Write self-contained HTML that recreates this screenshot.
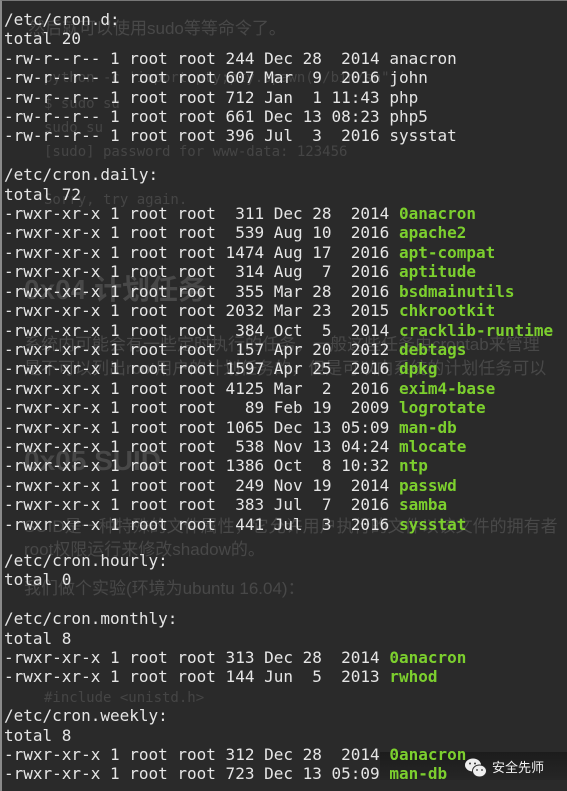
<!DOCTYPE html>
<html><head><meta charset="utf-8"><style>
body{margin:0;width:567px;height:791px;background:#2a2a2a;overflow:hidden;position:relative;font-family:"DejaVu Sans Mono","Liberation Mono",monospace;}
.frame{position:absolute;left:0;top:0;width:567px;height:791px;border-left:2px solid #8a8a8a;border-top:1px solid #777;box-sizing:border-box;}
pre{position:absolute;left:4px;margin:0;font-family:"DejaVu Sans Mono",monospace;font-size:16px;line-height:19.4px;color:#e6e6e6;white-space:pre;z-index:2}
b{color:#7ccf2e;font-weight:bold}
.g{position:absolute;color:rgba(150,150,150,0.28);font-family:"Liberation Sans","Noto Sans CJK SC",sans-serif;z-index:1;white-space:nowrap}
.gm{position:absolute;color:rgba(150,150,150,0.25);font-family:"DejaVu Sans Mono",monospace;font-size:14px;z-index:1;white-space:nowrap}
.wm{position:absolute;left:380px;top:752px;width:187px;height:28px;background:linear-gradient(#1c1c1c,#262626);z-index:1}
.wt{position:absolute;left:492px;top:757px;color:#f2f2f2;font-family:"Noto Sans CJK SC",sans-serif;font-size:13px;z-index:3}
</style></head><body>
<div class="frame"></div>
<div class="g" style="left:28px;top:14px;font-size:17px">然后就可以使用sudo等等命令了。</div>
<div class="gm" style="left:44px;top:70px">python -c 'import pty;pty.spawn("/bin/sh")'</div>
<div class="gm" style="left:44px;top:96px">$ sudo su</div>
<div class="gm" style="left:44px;top:120px">sudo su</div>
<div class="gm" style="left:44px;top:144px">[sudo] password for www-data: 123456</div>
<div class="gm" style="left:44px;top:192px">Sorry, try again.</div>
<div class="g" style="left:24px;top:268px;font-size:28px;font-weight:bold">0x04 计划任务</div>
<div class="g" style="left:24px;top:330px;font-size:17px">系统内可能会有一些定时执行的任务，一般这些任务由crontab来管理</div>
<div class="g" style="left:24px;top:354px;font-size:17px">是不可以列出root用户的计划任务的，但是可以内系统的计划任务可以</div>
<div class="g" style="left:24px;top:445px;font-size:28px;font-weight:bold">0x05 SUID</div>
<div class="g" style="left:24px;top:512px;font-size:17px">SUID是一种特殊的文件属性，它允许用户执行的文件以该文件的拥有者</div>
<div class="g" style="left:24px;top:535px;font-size:17px">root权限运行来修改shadow的。</div>
<div class="g" style="left:24px;top:574px;font-size:17px">我们做个实验(环境为ubuntu 16.04)：</div>
<div class="gm" style="left:44px;top:690px">#include &lt;unistd.h&gt;</div>
<pre style="top:10px">/etc/cron.d:
total 20
-rw-r--r-- 1 root root 244 Dec 28  2014 anacron
-rw-r--r-- 1 root root 607 Mar  9  2016 john
-rw-r--r-- 1 root root 712 Jan  1 11:43 php
-rw-r--r-- 1 root root 661 Dec 13 08:23 php5
-rw-r--r-- 1 root root 396 Jul  3  2016 sysstat

/etc/cron.daily:
total 72
-rwxr-xr-x 1 root root  311 Dec 28  2014 <b>0anacron</b>
-rwxr-xr-x 1 root root  539 Aug 10  2016 <b>apache2</b>
-rwxr-xr-x 1 root root 1474 Aug 17  2016 <b>apt-compat</b>
-rwxr-xr-x 1 root root  314 Aug  7  2016 <b>aptitude</b>
-rwxr-xr-x 1 root root  355 Mar 28  2016 <b>bsdmainutils</b>
-rwxr-xr-x 1 root root 2032 Mar 23  2015 <b>chkrootkit</b>
-rwxr-xr-x 1 root root  384 Oct  5  2014 <b>cracklib-runtime</b>
-rwxr-xr-x 1 root root  157 Apr 20  2012 <b>debtags</b>
-rwxr-xr-x 1 root root 1597 Apr 25  2016 <b>dpkg</b>
-rwxr-xr-x 1 root root 4125 Mar  2  2016 <b>exim4-base</b>
-rwxr-xr-x 1 root root   89 Feb 19  2009 <b>logrotate</b>
-rwxr-xr-x 1 root root 1065 Dec 13 05:09 <b>man-db</b>
-rwxr-xr-x 1 root root  538 Nov 13 04:24 <b>mlocate</b>
-rwxr-xr-x 1 root root 1386 Oct  8 10:32 <b>ntp</b>
-rwxr-xr-x 1 root root  249 Nov 19  2014 <b>passwd</b>
-rwxr-xr-x 1 root root  383 Jul  7  2016 <b>samba</b>
-rwxr-xr-x 1 root root  441 Jul  3  2016 <b>sysstat</b></pre>
<pre style="top:551px">/etc/cron.hourly:
total 0

/etc/cron.monthly:
total 8
-rwxr-xr-x 1 root root 313 Dec 28  2014 <b>0anacron</b>
-rwxr-xr-x 1 root root 144 Jun  5  2013 <b>rwhod</b>

/etc/cron.weekly:
total 8
-rwxr-xr-x 1 root root 312 Dec 28  2014 <b>0anacron</b>
-rwxr-xr-x 1 root root 723 Dec 13 05:09 <b>man-db</b></pre>
<div class="wm"></div>
<svg style="position:absolute;left:464px;top:757px;z-index:3" width="24" height="22" viewBox="0 0 24 22"><ellipse cx="9" cy="8" rx="8" ry="6.5" fill="#eee"/><ellipse cx="15.5" cy="14" rx="7" ry="6" fill="#eee" stroke="#2a2a2a" stroke-width="1"/><circle cx="6" cy="6.5" r="1" fill="#333"/><circle cx="11" cy="6.5" r="1" fill="#333"/><circle cx="13" cy="13" r="0.9" fill="#333"/><circle cx="18" cy="13" r="0.9" fill="#333"/></svg>
<div class="wt">安全先师</div>
</body></html>
